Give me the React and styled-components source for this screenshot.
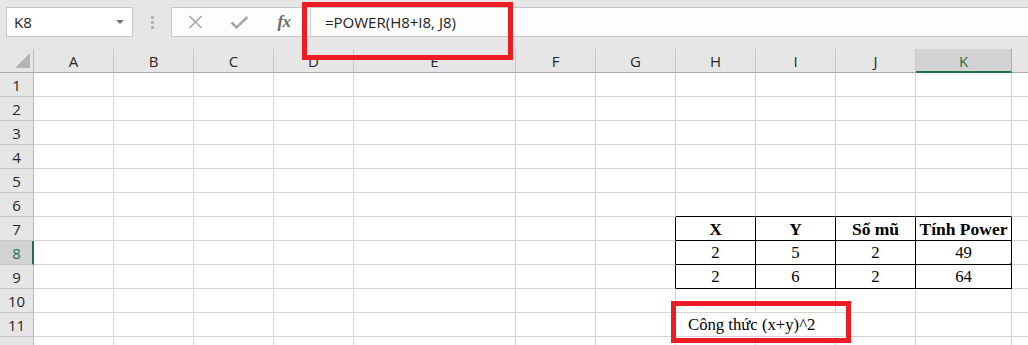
import React from "react";
import styled, { createGlobalStyle } from "styled-components";

const GlobalStyle = createGlobalStyle`
  html, body { margin: 0; padding: 0; background: #ffffff; overflow: hidden; }
  * { box-sizing: border-box; }
`;

const UI_FONT = `"Open Sans", "Noto Sans", "Liberation Sans", sans-serif`;
const CELL_FONT = `"Liberation Serif", "Times New Roman", serif`;
const GREEN = "#217346";
const GRID = "#d4d4d4";

const COLS = [
  { key: "A", w: 80 },
  { key: "B", w: 80 },
  { key: "C", w: 80 },
  { key: "D", w: 80 },
  { key: "E", w: 162 },
  { key: "F", w: 80 },
  { key: "G", w: 80 },
  { key: "H", w: 80 },
  { key: "I", w: 80 },
  { key: "J", w: 80 },
  { key: "K", w: 96 },
  { key: "L", w: 80, hideLabel: true },
];
const ROWS = [1, 2, 3, 4, 5, 6, 7, 8, 9, 10, 11, 12];

const CELLS = {
  H7: { v: "X", bold: true, align: "center" },
  I7: { v: "Y", bold: true, align: "center" },
  J7: { v: "Số mũ", bold: true, align: "center" },
  K7: { v: "Tính Power", bold: true, align: "center" },
  H8: { v: "2", align: "center" },
  I8: { v: "5", align: "center" },
  J8: { v: "2", align: "center" },
  K8: { v: "49", align: "center" },
  H9: { v: "2", align: "center" },
  I9: { v: "6", align: "center" },
  J9: { v: "2", align: "center" },
  K9: { v: "64", align: "center" },
  H11: { v: "Công thức (x+y)^2", align: "left", indent: 12, overflow: true },
};
const TABLE_COLS = ["H", "I", "J", "K"];
const TABLE_ROWS = [7, 8, 9];
const HIDDEN_RIGHT = ["H11", "I11"];

const Page = styled.div`
  position: relative;
  width: 1028px;
  height: 345px;
  overflow: hidden;
  background: #ffffff;
`;

const FormulaBar = styled.div`
  display: flex;
  align-items: flex-start;
  height: 49px;
  padding-top: 7px;
  padding-left: 6px;
  background: #e6e6e6;
  font-family: ${UI_FONT};
`;

const NameBox = styled.div`
  display: flex;
  align-items: center;
  justify-content: space-between;
  width: 127px;
  height: 30px;
  padding: 0 7px 0 7px;
  background: #ffffff;
  border: 1px solid #c6c6c6;
  font-size: 15px;
  color: #222222;
`;

const DropArrow = styled.span`
  width: 0;
  height: 0;
  margin-right: 1px;
  border-left: 4px solid transparent;
  border-right: 4px solid transparent;
  border-top: 4px solid #707070;
`;

const Grip = styled.div`
  display: flex;
  flex-direction: column;
  align-items: center;
  justify-content: center;
  gap: 2px;
  width: 38px;
  height: 30px;
`;

const GripDot = styled.span`
  width: 3px;
  height: 3px;
  background: #b4b4b4;
`;

const FxArea = styled.div`
  display: flex;
  align-items: center;
  width: 139px;
  height: 30px;
  background: #fdfdfd;
  border: 1px solid #c6c6c6;
  border-right: none;
`;

const IconSlot = styled.div`
  display: flex;
  align-items: center;
  justify-content: center;
  width: ${(p) => p.$w}px;
  height: 100%;
`;

const FxText = styled.span`
  font-family: ${CELL_FONT};
  font-style: italic;
  font-weight: bold;
  font-size: 17px;
  color: #6a6a6a;
  letter-spacing: -0.5px;
`;

const FormulaInput = styled.div`
  flex: 1;
  display: flex;
  align-items: center;
  height: 30px;
  padding-left: 14px;
  background: #fdfdfd;
  border: 1px solid #c6c6c6;
  border-right: none;
  font-size: 15px;
  color: #222222;
  white-space: nowrap;
`;

const Grid = styled.div`
  display: grid;
  grid-template-columns: 34px ${COLS.map((c) => `${c.w}px`).join(" ")};
  grid-auto-rows: 24px;
  background: #ffffff;
`;

const Corner = styled.div`
  position: relative;
  background: #e6e6e6;
  border-right: 1px solid #bdbdbd;
  border-bottom: 1px solid #ababab;
`;

const CornerTriangle = styled.span`
  position: absolute;
  right: 3px;
  bottom: 4px;
  width: 0;
  height: 0;
  border-left: 15px solid transparent;
  border-bottom: 15px solid #b4b4b4;
`;

const ColHeader = styled.div`
  display: flex;
  align-items: center;
  justify-content: center;
  background: ${(p) => (p.$active ? "#d2d2d2" : "#e6e6e6")};
  border-right: 1px solid ${(p) => (p.$active ? "#ababab" : "#c8c8c8")};
  border-bottom: ${(p) => (p.$active ? `2px solid ${GREEN}` : "1px solid #ababab")};
  font-family: ${UI_FONT};
  font-size: 15px;
  color: ${(p) => (p.$active ? GREEN : "#262626")};
  padding-top: ${(p) => (p.$active ? "1px" : "0")};
`;

const RowHeader = styled.div`
  display: flex;
  align-items: center;
  justify-content: center;
  background: ${(p) => (p.$active ? "#d2d2d2" : "#e6e6e6")};
  border-right: ${(p) => (p.$active ? `2px solid ${GREEN}` : "1px solid #bdbdbd")};
  border-bottom: 1px solid #c8c8c8;
  font-family: ${UI_FONT};
  font-size: 15px;
  color: ${(p) => (p.$active ? GREEN : "#262626")};
  padding-left: ${(p) => (p.$active ? "1px" : "0")};
`;

const Cell = styled.div`
  position: relative;
  display: flex;
  align-items: center;
  justify-content: ${(p) => (p.$align === "center" ? "center" : "flex-start")};
  padding-left: ${(p) => p.$indent || 0}px;
  border-right: 1px solid ${(p) => p.$right};
  border-bottom: 1px solid ${(p) => p.$bottom};
  font-family: ${CELL_FONT};
  font-size: ${(p) => (p.$bold ? "17.5px" : "16.7px")};
  font-weight: ${(p) => (p.$bold ? "bold" : "normal")};
  color: #000000;
  white-space: nowrap;
  overflow: ${(p) => (p.$overflow ? "visible" : "hidden")};
  z-index: ${(p) => (p.$overflow ? 1 : 0)};
  padding-top: 1px;
`;

const Selection = styled.span`
  position: absolute;
  left: -2px;
  top: -2px;
  right: -2px;
  bottom: -2px;
  border: 2px solid ${GREEN};
  pointer-events: none;
  z-index: 2;
`;

const FillHandle = styled.span`
  position: absolute;
  right: -4px;
  bottom: -4px;
  width: 6px;
  height: 6px;
  background: ${GREEN};
  border: 1px solid #ffffff;
  z-index: 3;
`;

const Annotation = styled.div`
  position: absolute;
  left: ${(p) => p.$x}px;
  top: ${(p) => p.$y}px;
  width: ${(p) => p.$w}px;
  height: ${(p) => p.$h}px;
  border: 5px solid #ed1c24;
  pointer-events: none;
  z-index: 5;
`;

function CancelIcon() {
  return (
    <svg width="15" height="14" viewBox="0 0 15 14">
      <path d="M1.5 1 L13.5 13 M13.5 1 L1.5 13" stroke="#a8a8a8" strokeWidth="1.6" fill="none" />
    </svg>
  );
}

function CheckIcon() {
  return (
    <svg width="19" height="13" viewBox="0 0 19 13">
      <path d="M1.5 6.5 L6.5 11.5 L17.5 1" stroke="#a8a8a8" strokeWidth="2.6" fill="none" />
    </svg>
  );
}

function cellBorders(col, row) {
  const id = `${col}${row}`;
  const inTable = TABLE_COLS.includes(col) && TABLE_ROWS.includes(row);
  const leftOfTable = col === "G" && TABLE_ROWS.includes(row);
  const aboveTable = TABLE_COLS.includes(col) && row === 6;
  let right = inTable || leftOfTable ? "#000000" : GRID;
  let bottom = inTable || aboveTable ? "#000000" : GRID;
  if (HIDDEN_RIGHT.includes(id)) right = "transparent";
  return { right, bottom };
}

export default function App() {
  const activeCol = "K";
  const activeRow = 8;
  return (
    <Page>
      <GlobalStyle />
      <FormulaBar>
        <NameBox>
          <span>K8</span>
          <DropArrow />
        </NameBox>
        <Grip>
          <GripDot />
          <GripDot />
          <GripDot />
        </Grip>
        <FxArea>
          <IconSlot $w={46}>
            <CancelIcon />
          </IconSlot>
          <IconSlot $w={42}>
            <CheckIcon />
          </IconSlot>
          <IconSlot $w={48}>
            <FxText>fx</FxText>
          </IconSlot>
        </FxArea>
        <FormulaInput>=POWER(H8+I8, J8)</FormulaInput>
      </FormulaBar>

      <Grid>
        <Corner>
          <CornerTriangle />
        </Corner>
        {COLS.map((c) => (
          <ColHeader key={c.key} $active={c.key === activeCol}>
            {c.hideLabel ? null : c.key}
          </ColHeader>
        ))}
        {ROWS.map((r) => (
          <React.Fragment key={r}>
            <RowHeader $active={r === activeRow}>{r}</RowHeader>
            {COLS.map((c) => {
              const id = `${c.key}${r}`;
              const data = CELLS[id];
              const b = cellBorders(c.key, r);
              const selected = c.key === activeCol && r === activeRow;
              return (
                <Cell
                  key={id}
                  $right={b.right}
                  $bottom={b.bottom}
                  $align={data?.align}
                  $bold={data?.bold}
                  $indent={data?.indent}
                  $overflow={data?.overflow}
                >
                  {data?.v}
                  {selected && (
                    <>
                      <Selection />
                      <FillHandle />
                    </>
                  )}
                </Cell>
              );
            })}
          </React.Fragment>
        ))}
      </Grid>

      <Annotation $x={302} $y={2} $w={211} $h={58} />
      <Annotation $x={671} $y={301} $w={180} $h={42} />
    </Page>
  );
}
